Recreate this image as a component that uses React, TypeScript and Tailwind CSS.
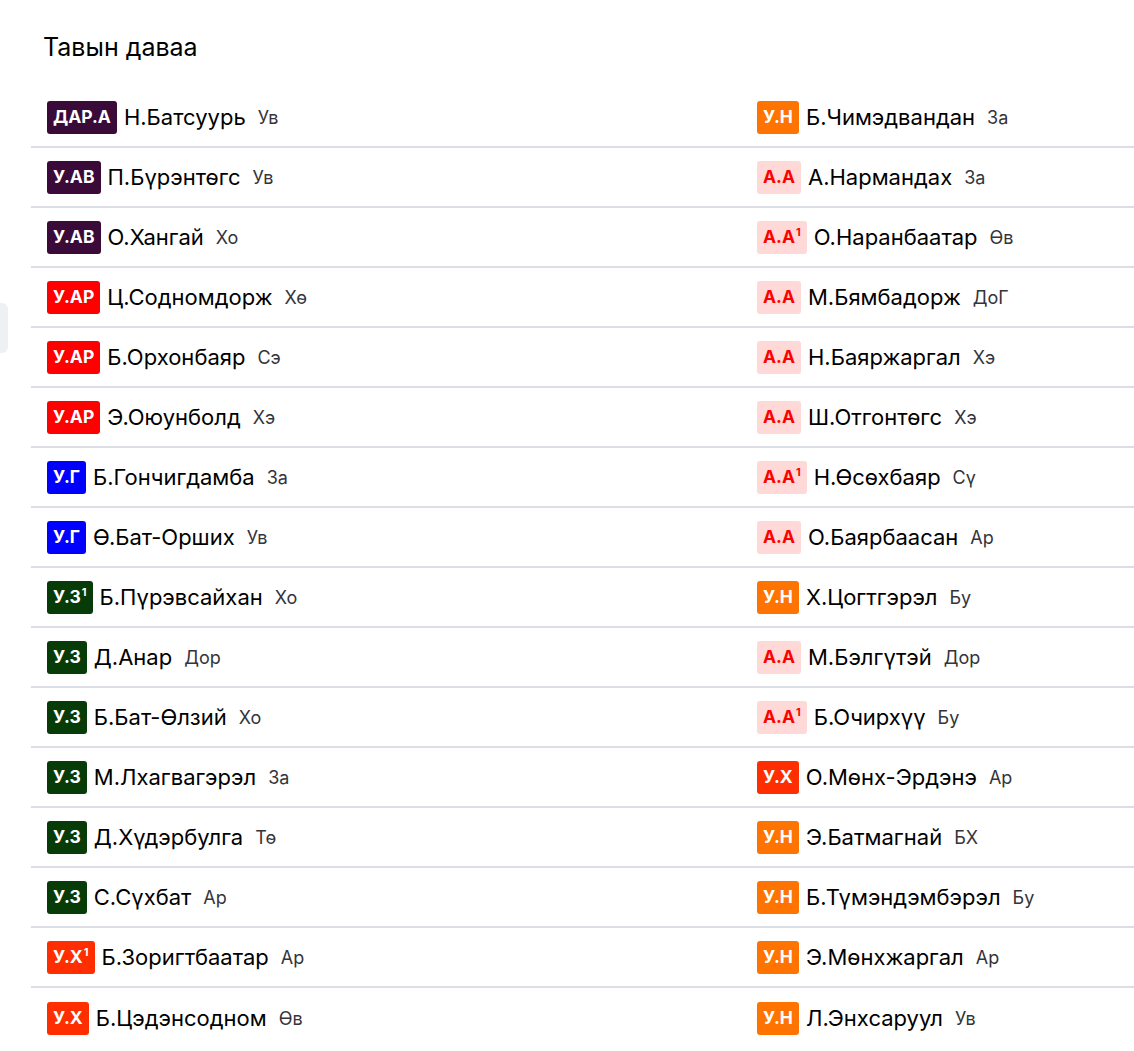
import React from 'react';

type Row = { badge: string; sup?: boolean; name: string; place: string };

const badgeStyles: Record<string, string> = {
  'ДАР.А': 'bg-[#3a0a38] text-white',
  'У.АВ': 'bg-[#3a0a38] text-white',
  'У.АР': 'bg-[#fe0000] text-white',
  'У.Г': 'bg-[#0000fe] text-white',
  'У.З': 'bg-[#073b07] text-white',
  'У.Х': 'bg-[#ff2e00] text-white',
  'У.Н': 'bg-[#ff7300] text-white',
  'А.А': 'bg-[#ffd8d8] text-[#fe0000]',
};

const left: Row[] = [
  { badge: 'ДАР.А', name: 'Н.Батсуурь', place: 'Ув' },
  { badge: 'У.АВ', name: 'П.Бүрэнтөгс', place: 'Ув' },
  { badge: 'У.АВ', name: 'О.Хангай', place: 'Хо' },
  { badge: 'У.АР', name: 'Ц.Содномдорж', place: 'Хө' },
  { badge: 'У.АР', name: 'Б.Орхонбаяр', place: 'Сэ' },
  { badge: 'У.АР', name: 'Э.Оюунболд', place: 'Хэ' },
  { badge: 'У.Г', name: 'Б.Гончигдамба', place: 'За' },
  { badge: 'У.Г', name: 'Ө.Бат-Орших', place: 'Ув' },
  { badge: 'У.З', sup: true, name: 'Б.Пүрэвсайхан', place: 'Хо' },
  { badge: 'У.З', name: 'Д.Анар', place: 'Дор' },
  { badge: 'У.З', name: 'Б.Бат-Өлзий', place: 'Хо' },
  { badge: 'У.З', name: 'М.Лхагвагэрэл', place: 'За' },
  { badge: 'У.З', name: 'Д.Хүдэрбулга', place: 'Тө' },
  { badge: 'У.З', name: 'С.Сүхбат', place: 'Ар' },
  { badge: 'У.Х', sup: true, name: 'Б.Зоригтбаатар', place: 'Ар' },
  { badge: 'У.Х', name: 'Б.Цэдэнсодном', place: 'Өв' },
];

const right: Row[] = [
  { badge: 'У.Н', name: 'Б.Чимэдвандан', place: 'За' },
  { badge: 'А.А', name: 'А.Нармандах', place: 'За' },
  { badge: 'А.А', sup: true, name: 'О.Наранбаатар', place: 'Өв' },
  { badge: 'А.А', name: 'М.Бямбадорж', place: 'ДоГ' },
  { badge: 'А.А', name: 'Н.Баяржаргал', place: 'Хэ' },
  { badge: 'А.А', name: 'Ш.Отгонтөгс', place: 'Хэ' },
  { badge: 'А.А', sup: true, name: 'Н.Өсөхбаяр', place: 'Сү' },
  { badge: 'А.А', name: 'О.Баярбаасан', place: 'Ар' },
  { badge: 'У.Н', name: 'Х.Цогтгэрэл', place: 'Бу' },
  { badge: 'А.А', name: 'М.Бэлгүтэй', place: 'Дор' },
  { badge: 'А.А', sup: true, name: 'Б.Очирхүү', place: 'Бу' },
  { badge: 'У.Х', name: 'О.Мөнх-Эрдэнэ', place: 'Ар' },
  { badge: 'У.Н', name: 'Э.Батмагнай', place: 'БХ' },
  { badge: 'У.Н', name: 'Б.Түмэндэмбэрэл', place: 'Бу' },
  { badge: 'У.Н', name: 'Э.Мөнхжаргал', place: 'Ар' },
  { badge: 'У.Н', name: 'Л.Энхсаруул', place: 'Ув' },
];

function Cell({ row, last }: { row: Row; last: boolean }) {
  return (
    <div className={`flex h-[60px] items-center pl-4 ${last ? '' : 'border-b-2 border-[#dcdee6]'}`}>
      <span className={`flex h-[33px] items-center rounded-[3px] px-[6px] text-[17.5px] font-bold ${badgeStyles[row.badge]}`}>
        {row.badge}
        {row.sup && <sup className="ml-[1px] text-[11px] font-bold">1</sup>}
      </span>
      <span className="ml-[7px] text-[22px] text-black">{row.name}</span>
      <span className="ml-3 text-[18px] text-[#34343a]">{row.place}</span>
    </div>
  );
}

export default function App() {
  return (
    <div className="relative h-[1051px] w-[1134px] overflow-hidden bg-white font-['Inter','Noto_Sans',sans-serif]">
      {/* partial panel cut off at the left edge */}
      <div className="absolute left-[-12px] top-[303px] h-[50px] w-[20px] rounded-md bg-[#eef0f3]" />

      <h1 className="pl-[43px] pt-[31px] text-[25px] leading-[32px] text-black">Тавын даваа</h1>

      <div className="ml-[31px] mt-[25px] grid w-[1420px] grid-cols-2">
        <div className="flex flex-col">
          {left.map((r, i) => (
            <Cell key={i} row={r} last={i === left.length - 1} />
          ))}
        </div>
        <div className="flex flex-col">
          {right.map((r, i) => (
            <Cell key={i} row={r} last={i === right.length - 1} />
          ))}
        </div>
      </div>
    </div>
  );
}
